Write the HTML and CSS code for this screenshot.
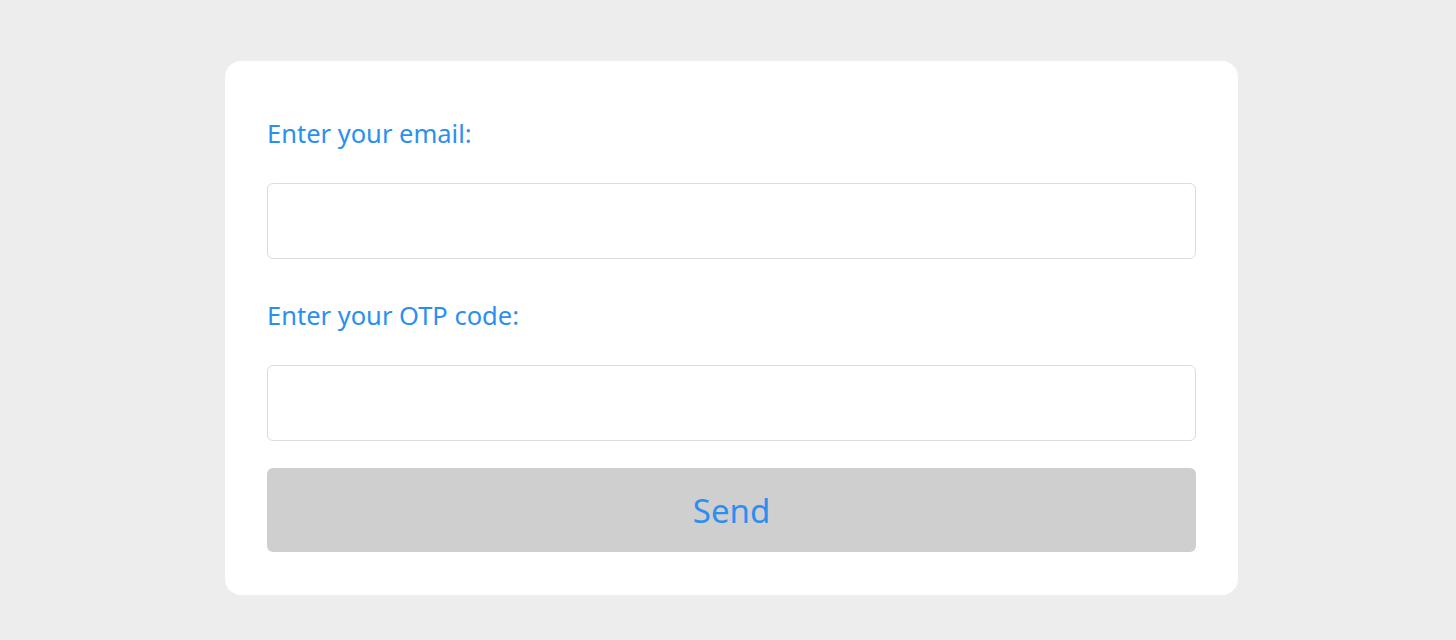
FILE: index.html
```html
<!DOCTYPE html>
<html lang="en">
<head>
<meta charset="utf-8">
<title>OTP</title>
<link rel="stylesheet" href="styles.css">
</head>
<body>
<main class="page">
  <form class="card">
    <label class="label label-first" for="email">Enter your email:</label>
    <input class="field" id="email" type="email">
    <label class="label label-second" for="otp">Enter your OTP code:</label>
    <input class="field" id="otp" type="text">
    <button class="send" type="button">Send</button>
  </form>
</main>
</body>
</html>
```
FILE: styles.css
```css
html, body {
  margin: 0;
  padding: 0;
  background: #ededed;
}
body {
  font-family: "Noto Sans", "Open Sans", sans-serif;
  height: 640px;
  overflow: hidden;
}
.page {
  padding: 61px 218px 0 225px;
}
.card {
  box-sizing: border-box;
  width: 1013px;
  background: #ffffff;
  border-radius: 16px;
  padding: 56px 42px 43px;
  display: flex;
  flex-direction: column;
}
.label {
  display: block;
  color: #2b8ff0;
  font-size: 25.5px;
  line-height: 32px;
}
.label-second {
  margin-top: 40px;
}
.field {
  box-sizing: border-box;
  display: block;
  width: 100%;
  height: 76px;
  margin: 34px 0 0;
  border: 1px solid #dcdcdf;
  border-radius: 6px;
  background: #fff;
  font: inherit;
  outline: none;
}
.send {
  margin-top: 27px;
  height: 84px;
  border: none;
  border-radius: 6px;
  background: #cfcfcf;
  color: #2b8ff0;
  font-family: inherit;
  font-size: 33px;
  display: flex;
  align-items: center;
  justify-content: center;
  padding: 0;
}
```
